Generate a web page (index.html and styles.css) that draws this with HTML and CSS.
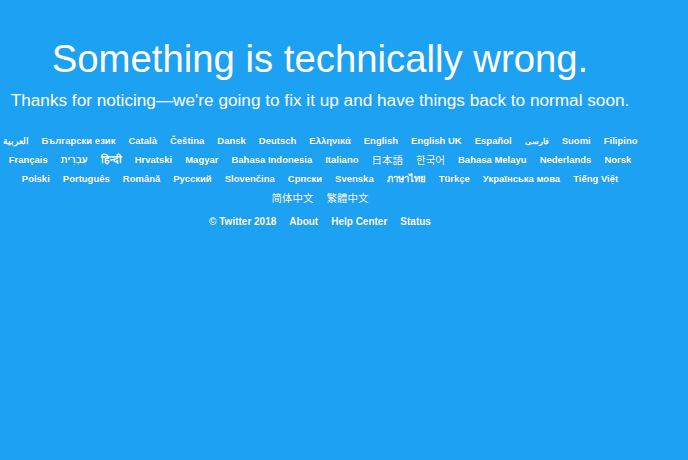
FILE: index.html
```html
<!DOCTYPE html>
<html>

	<head>
		<meta charset="utf-8" />
		<title>Twitter / Error</title>
		<link rel="stylesheet" href="styles.css">
	</head>

	<body>
		<div id="page">
			<h1 class="title">Something is technically wrong.</h1>
			<p class="sub">Thanks for noticing—we're going to fix it up and have things back to normal soon.</p>
			<ul class="lang">
				<li><a href="#" lang="ar">العربية</a></li>
				<li><a href="#">Български език</a></li>
				<li><a href="#">Català</a></li>
				<li><a href="#">Čeština</a></li>
				<li><a href="#">Dansk</a></li>
				<li><a href="#">Deutsch</a></li>
				<li><a href="#">Ελληνικά</a></li>
				<li><a href="#">English</a></li>
				<li><a href="#">English UK</a></li>
				<li><a href="#">Español</a></li>
				<li><a href="#" lang="fa">فارسی</a></li>
				<li><a href="#">Suomi</a></li>
				<li><a href="#">Filipino</a></li>
				<li><a href="#">Français</a></li>
				<li><a href="#" lang="he">עִבְרִית</a></li>
				<li><a href="#" lang="hi">हिन्दी</a></li>
				<li><a href="#">Hrvatski</a></li>
				<li><a href="#">Magyar</a></li>
				<li><a href="#">Bahasa Indonesia</a></li>
				<li><a href="#">Italiano</a></li>
				<li><a href="#" lang="ja">日本語</a></li>
				<li><a href="#" lang="ko">한국어</a></li>
				<li><a href="#">Bahasa Melayu</a></li>
				<li><a href="#">Nederlands</a></li>
				<li><a href="#">Norsk</a></li>
				<li><a href="#">Polski</a></li>
				<li><a href="#">Português</a></li>
				<li><a href="#">Română</a></li>
				<li><a href="#">Русский</a></li>
				<li><a href="#">Slovenčina</a></li>
				<li><a href="#">Српски</a></li>
				<li><a href="#">Svenska</a></li>
				<li><a href="#">ภาษาไทย</a></li>
				<li><a href="#">Türkçe</a></li>
				<li><a href="#">Українська мова</a></li>
				<li><a href="#">Tiếng Việt</a></li>
				<li><a href="#" lang="zh-CN">简体中文</a></li>
				<li><a href="#" lang="zh-TW">繁體中文</a></li>
			</ul>
			<ul class="foot">
				<li>© Twitter 2018</li>
				<li><a href="#">About</a></li>
				<li><a href="#">Help Center</a></li>
				<li><a href="#">Status</a></li>
			</ul>
		</div>
	</body>

</html>
```

FILE: styles.css
```css
* {
	margin: 0;
	padding: 0;
}

html,
body {
	height: 100%;
}

body {
	background-color: #1da1f2;
	color: #fff;
	font-family: "Liberation Sans", Arial, "Noto Sans CJK SC", sans-serif;
}

#page {
	width: 640px;
	padding-top: 36px;
	text-align: center;
}

.title {
	font-size: 38.3px;
	font-weight: normal;
	line-height: 46px;
}

.sub {
	margin-top: 7px;
	font-size: 17.2px;
	line-height: 22px;
}

li {
	list-style: none;
}

a {
	color: #fff;
	text-decoration: none;
}

.lang,
.foot {
	display: flex;
	flex-wrap: wrap;
	justify-content: center;
	column-gap: 13px;
	font-size: 10px;
	font-weight: bold;
	text-shadow: 0 0 1px rgba(0, 0, 0, 0.2);
}

.lang li,
.foot li {
	height: 19px;
	line-height: 19px;
	white-space: nowrap;
}

.lang {
	margin-top: 20px;
	font-size: 9.5px;
}

.lang a[lang="ar"] {
	font-size: 8.6px;
}

.lang a[lang="fa"] {
	font-size: 8px;
}

.lang a[lang="hi"] {
	font-size: 10.5px;
}

.lang a[lang="zh-CN"],
.lang a[lang="zh-TW"],
.lang a[lang="ja"] {
	font-family: "Noto Sans CJK SC", sans-serif;
	font-size: 10.5px;
	font-weight: normal;
}

.lang a[lang="ko"] {
	font-family: "Noto Sans CJK KR", sans-serif;
	font-size: 10.5px;
	font-weight: normal;
}

.foot {
	margin-top: 5px;
}
```
